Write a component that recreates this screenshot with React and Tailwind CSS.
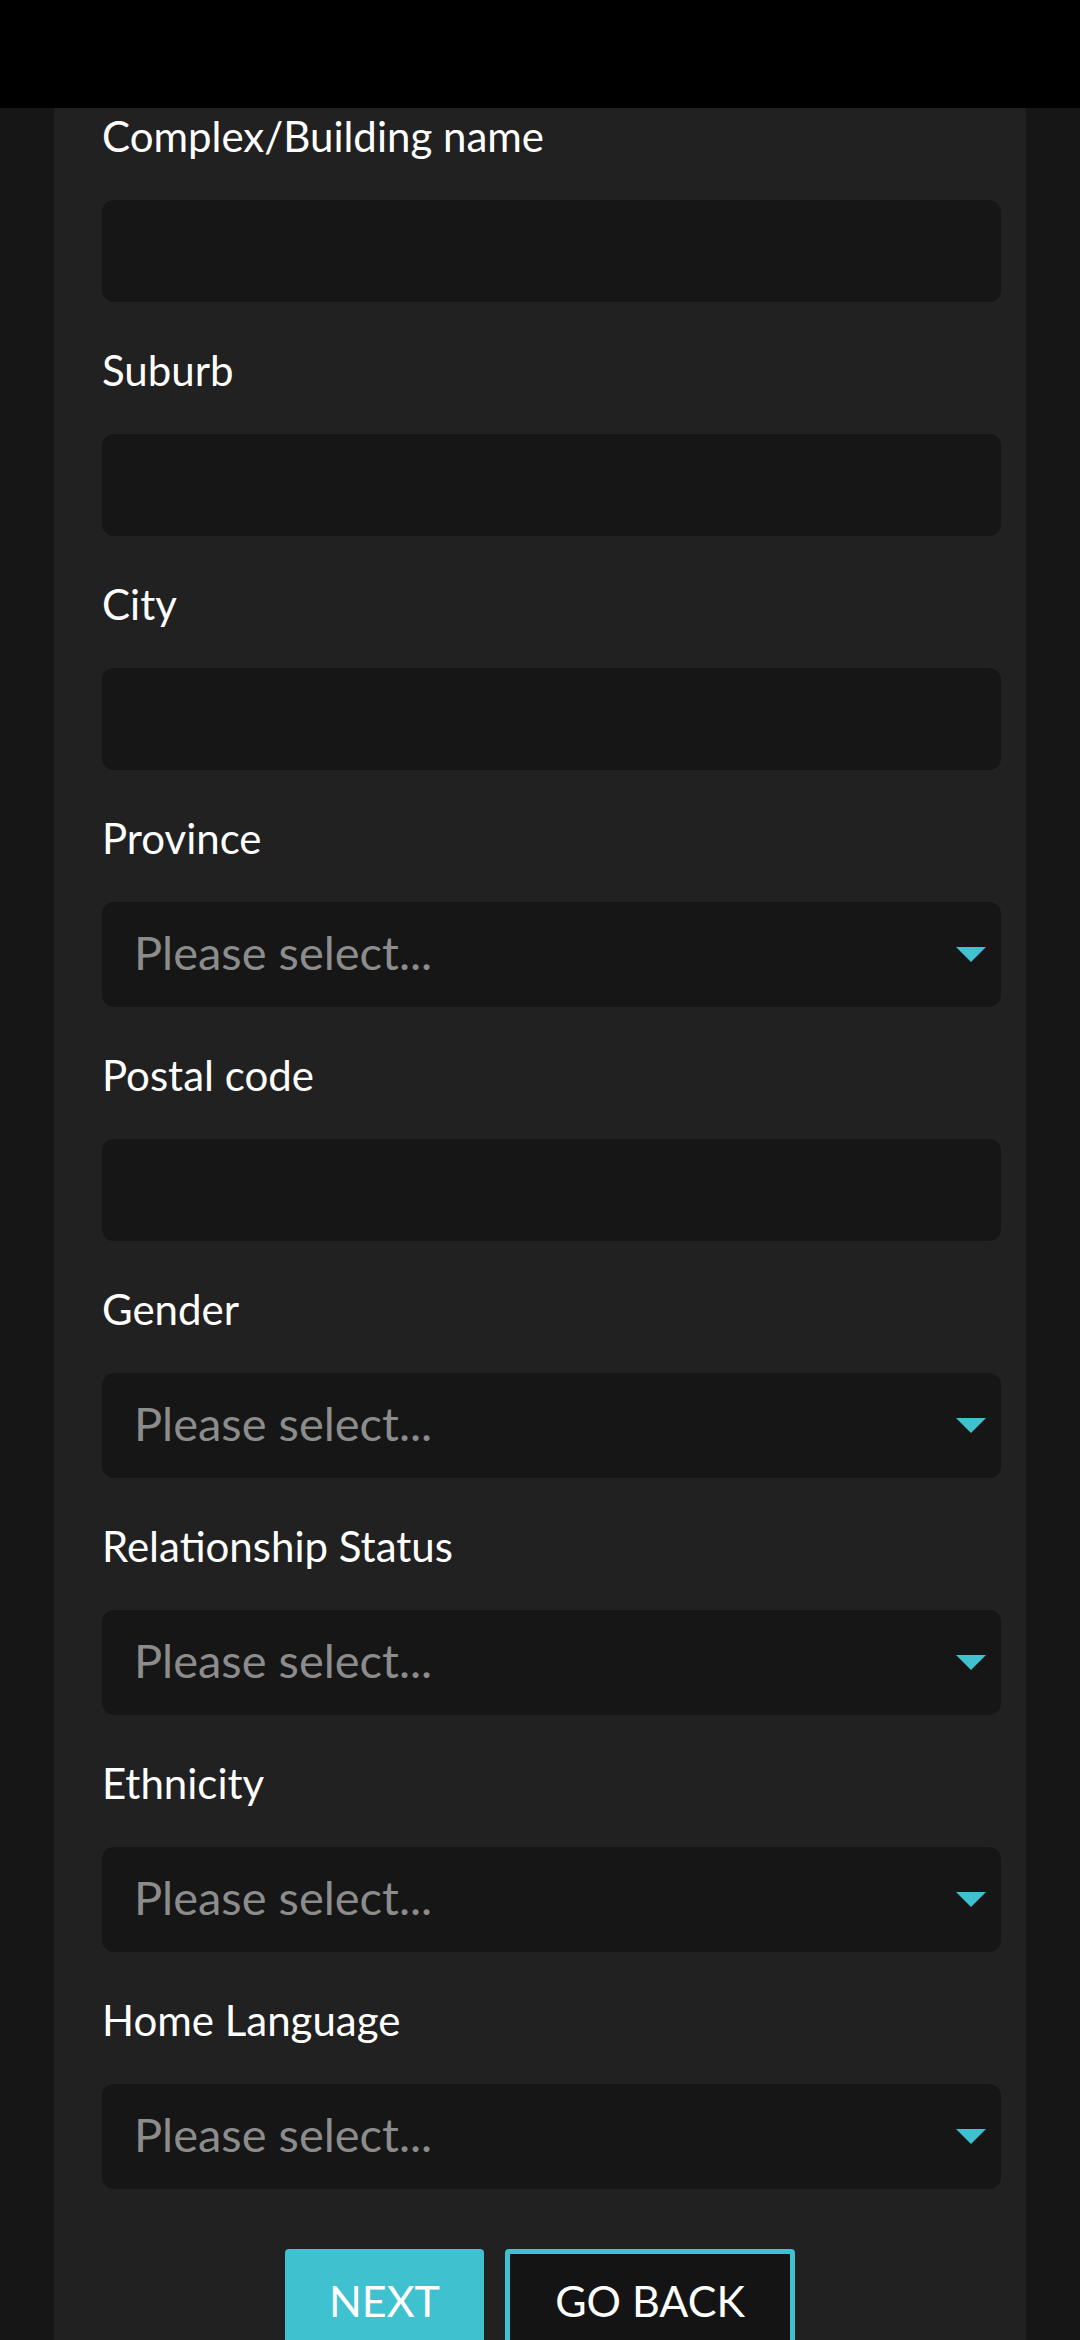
import React from "react";

const fields = [
  { label: "Complex/Building name", type: "text" },
  { label: "Suburb", type: "text" },
  { label: "City", type: "text" },
  { label: "Province", type: "select" },
  { label: "Postal code", type: "text" },
  { label: "Gender", type: "select" },
  { label: "Relationship Status", type: "select" },
  { label: "Ethnicity", type: "select" },
  { label: "Home Language", type: "select" },
];

function Caret() {
  return (
    <svg width="30" height="15" viewBox="0 0 30 15" className="block">
      <polygon points="0,0 30,0 15,15" fill="#40c1cf" />
    </svg>
  );
}

function Field({ label, type }) {
  return (
    <div className="flex flex-col mb-[47px]">
      <div className="text-[42px] leading-[43px] h-[43px] text-white whitespace-nowrap">
        {label}
      </div>
      {type === "text" ? (
        <div className="mt-[42px] h-[102px] rounded-[12px] bg-[#161616]" />
      ) : (
        <div className="mt-[42px] h-[105px] rounded-[12px] bg-[#161616] flex items-center justify-between pl-[32px] pr-[15px]">
          <span className="text-[47px] leading-[48px] text-[#8c8c8c] pb-[6px] whitespace-nowrap">
            Please select...
          </span>
          <Caret />
        </div>
      )}
    </div>
  );
}

export default function App() {
  return (
    <div
      className="w-[1080px] h-[2340px] overflow-hidden bg-[#161616] flex flex-col"
      style={{ fontFamily: "Lato, 'Noto Sans', 'Liberation Sans', sans-serif" }}
    >
      <div className="h-[108px] bg-black shrink-0" />
      <div className="flex-1 mx-[54px] bg-[#222122] pl-[48px] pr-[25px] pt-[7px]">
        {fields.map((f) => (
          <Field key={f.label} {...f} />
        ))}
        <div className="flex justify-center gap-[21px] mt-[60px] pr-[23px]">
          <button className="w-[199px] h-[120px] rounded-[4px] bg-[#40c1cf] text-white text-[43px] leading-[43px] pt-[30px] flex justify-center items-start">
            NEXT
          </button>
          <button className="w-[290px] h-[120px] rounded-[4px] bg-[#141414] border-[5px] border-[#40c1cf] text-white text-[43px] leading-[43px] pt-[25px] flex justify-center items-start">
            GO BACK
          </button>
        </div>
      </div>
    </div>
  );
}
